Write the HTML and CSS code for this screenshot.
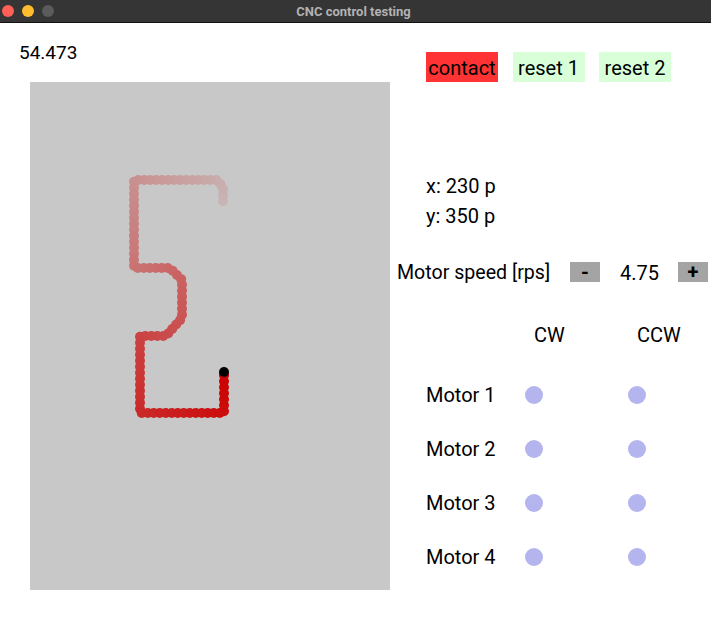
FILE: index.html
```html
<!DOCTYPE html>
<html>
<head>
<meta charset="utf-8">
<title>CNC control testing</title>
<link rel="stylesheet" href="styles.css">
</head>
<body>
<div class="titlebar">
  <div class="lights">
    <span class="light red"></span>
    <span class="light yellow"></span>
    <span class="light grey"></span>
  </div>
  <div class="title">CNC control testing</div>
  <div></div>
</div>
<div class="app">
  <div class="left">
    <div class="timer">54.473</div>
    <canvas id="plot" class="plot" width="360" height="508"></canvas>
  </div>
  <div class="right">
    <div class="buttons">
      <span class="btn btn-contact">contact</span>
      <span class="btn btn-reset">reset 1</span>
      <span class="btn btn-reset">reset 2</span>
    </div>
    <div class="coords">
      <div class="line">x: 230 p</div>
      <div class="line">y: 350 p</div>
    </div>
    <div class="speed">
      <span class="speed-label">Motor speed [rps]</span>
      <span class="step">-</span>
      <span class="speed-value">4.75</span>
      <span class="step">+</span>
    </div>
    <div class="motors">
      <div></div><div class="head">CW</div><div class="head">CCW</div>
      <div class="name">Motor 1</div><div class="cell"><span class="dot"></span></div><div class="cell"><span class="dot"></span></div>
      <div class="name">Motor 2</div><div class="cell"><span class="dot"></span></div><div class="cell"><span class="dot"></span></div>
      <div class="name">Motor 3</div><div class="cell"><span class="dot"></span></div><div class="cell"><span class="dot"></span></div>
      <div class="name">Motor 4</div><div class="cell"><span class="dot"></span></div><div class="cell"><span class="dot"></span></div>
    </div>
  </div>
</div>
<script src="script.js"></script>
</body>
</html>
```
FILE: styles.css
```css
html, body {
  margin: 0;
  padding: 0;
  background: #ffffff;
  font-family: Roboto, "Liberation Sans", sans-serif;
  color: #000;
}
.titlebar {
  height: 22px;
  background: #353535;
  border-bottom: 1px solid #111111;
  display: grid;
  grid-template-columns: 1fr auto 1fr;
  align-items: center;
}
.lights {
  display: flex;
  gap: 8px;
  padding-left: 2px;
}
.light {
  width: 12px;
  height: 12px;
  border-radius: 50%;
  display: block;
}
.red { background: #fe5f57; }
.yellow { background: #febc2e; }
.grey { background: #5b5b5b; }
.title {
  font-size: 13px;
  font-weight: bold;
  color: #b2b2b2;
  margin-right: 4px;
}
.app {
  display: flex;
}
.left {
  width: 397px;
  padding-top: 19px;
}
.timer {
  font-size: 19px;
  line-height: 22px;
  padding-left: 19px;
}
.plot {
  display: block;
  margin-top: 18px;
  margin-left: 30px;
  width: 360px;
  height: 508px;
  background: #c8c8c8;
}
.right {
  flex: 1;
  font-size: 20px;
}
.buttons {
  display: flex;
  gap: 14.5px;
  margin-top: 29px;
  padding-left: 29px;
}
.btn {
  width: 72px;
  height: 30px;
  box-sizing: border-box;
  padding-top: 2px;
  line-height: 28px;
  text-align: center;
}
.btn-contact { background: #ff3333; }
.btn-reset { background: #d9ffd9; }
.coords {
  margin-top: 89px;
  padding-left: 29px;
}
.line {
  line-height: 30px;
}
.speed {
  display: flex;
  align-items: flex-start;
  margin-top: 27px;
  line-height: 30px;
  font-size: 19.6px;
}
.speed-label {
  width: 173px;
}
.step {
  width: 30px;
  height: 20px;
  margin-top: 4px;
  background: #a4a4a4;
  line-height: 20px;
  text-align: center;
  font-weight: bold;
  font-size: 20px;
}
.speed-value {
  width: 38px;
  margin: 0 20px;
  font-size: 20px;
}
.motors {
  display: grid;
  grid-template-columns: 99px 103px auto;
  grid-template-rows: 36px repeat(4, 30px);
  row-gap: 24px;
  margin-top: 32px;
  padding-left: 29px;
  line-height: 30px;
}
.head {
  padding-left: 9px;
}
.cell {
  display: flex;
  align-items: center;
}
.dot {
  width: 18px;
  height: 18px;
  border-radius: 50%;
  background: #b4b4ee;
}
```
FILE: script.js
```js
(function () {
  var c = document.getElementById('plot');
  var ctx = c.getContext('2d');
  var pts = [
    [193,119],[193,105],[187,98],[104,98],[104,186],[140,186],[152,198],
    [152,236],[136,254],[110,254],[110,331],[194,331],[194,290]
  ];
  var segs = [], total = 0;
  for (var i = 1; i < pts.length; i++) {
    var dx = pts[i][0] - pts[i-1][0], dy = pts[i][1] - pts[i-1][1];
    var l = Math.sqrt(dx*dx + dy*dy);
    segs.push(l); total += l;
  }
  var step = 6;
  function at(s) {
    var acc = 0;
    for (var i = 0; i < segs.length; i++) {
      if (s <= acc + segs[i] || i === segs.length - 1) {
        var t = Math.min(1, (s - acc) / segs[i]);
        return [pts[i][0] + (pts[i+1][0]-pts[i][0])*t, pts[i][1] + (pts[i+1][1]-pts[i][1])*t];
      }
      acc += segs[i];
    }
  }
  for (var d = 0; d <= total + 0.01; d += step) {
    var p = at(Math.min(d, total));
    var a = 0.1 + 0.9 * (d / total);
    var r = Math.round(200 + 4*a), g = Math.round(200*(1-a));
    ctx.fillStyle = 'rgb(' + r + ',' + g + ',' + g + ')';
    ctx.beginPath();
    ctx.arc(p[0], p[1], 5, 0, Math.PI*2);
    ctx.fill();
  }
  ctx.fillStyle = '#000';
  ctx.beginPath(); ctx.arc(194, 290, 5, 0, Math.PI*2); ctx.fill();
})();
```
